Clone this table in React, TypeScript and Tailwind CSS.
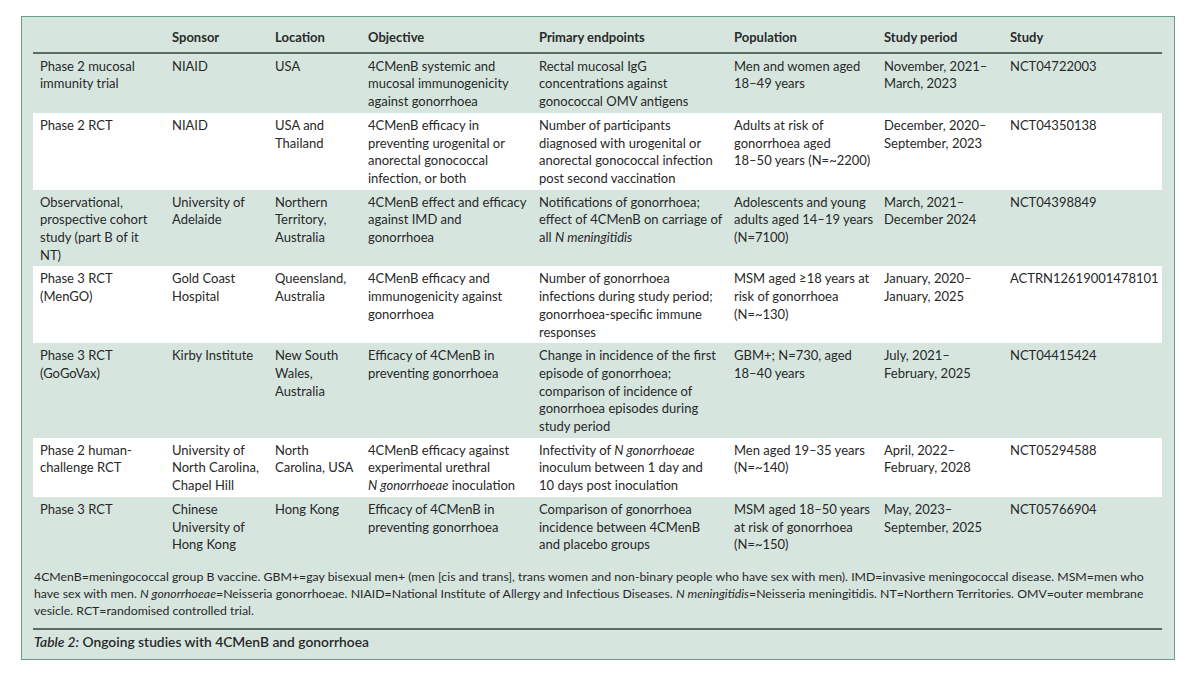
import type { ReactNode } from 'react'

type Row = { cells: ReactNode[][]; white?: boolean }

const cols = 'grid grid-cols-[139px_103px_93px_171px_195px_150px_126px_1fr]'

const headers = ['', 'Sponsor', 'Location', 'Objective', 'Primary endpoints', 'Population', 'Study period', 'Study']

const rows: Row[] = [
  {
    cells: [
      ['Phase 2 mucosal', 'immunity trial'],
      ['NIAID'],
      ['USA'],
      ['4CMenB systemic and', 'mucosal immunogenicity', 'against gonorrhoea'],
      ['Rectal mucosal IgG', 'concentrations against', 'gonococcal OMV antigens'],
      ['Men and women aged', '18–49 years'],
      ['November, 2021–', 'March, 2023'],
      ['NCT04722003'],
    ],
  },
  {
    white: true,
    cells: [
      ['Phase 2 RCT'],
      ['NIAID'],
      ['USA and', 'Thailand'],
      ['4CMenB efficacy in', 'preventing urogenital or', 'anorectal gonococcal', 'infection, or both'],
      ['Number of participants', 'diagnosed with urogenital or', 'anorectal gonococcal infection', 'post second vaccination'],
      ['Adults at risk of', 'gonorrhoea aged', '18–50 years (N=~2200)'],
      ['December, 2020–', 'September, 2023'],
      ['NCT04350138'],
    ],
  },
  {
    cells: [
      ['Observational,', 'prospective cohort', 'study (part B of it', 'NT)'],
      ['University of', 'Adelaide'],
      ['Northern', 'Territory,', 'Australia'],
      ['4CMenB effect and efficacy', 'against IMD and', 'gonorrhoea'],
      [
        'Notifications of gonorrhoea;',
        'effect of 4CMenB on carriage of',
        <>all <i>N meningitidis</i></>,
      ],
      ['Adolescents and young', 'adults aged 14–19 years', '(N=7100)'],
      ['March, 2021–', 'December 2024'],
      ['NCT04398849'],
    ],
  },
  {
    white: true,
    cells: [
      ['Phase 3 RCT', '(MenGO)'],
      ['Gold Coast', 'Hospital'],
      ['Queensland,', 'Australia'],
      ['4CMenB efficacy and', 'immunogenicity against', 'gonorrhoea'],
      ['Number of gonorrhoea', 'infections during study period;', 'gonorrhoea-specific immune', 'responses'],
      ['MSM aged ≥18 years at', 'risk of gonorrhoea', '(N=~130)'],
      ['January, 2020–', 'January, 2025'],
      ['ACTRN12619001478101'],
    ],
  },
  {
    cells: [
      ['Phase 3 RCT', '(GoGoVax)'],
      ['Kirby Institute'],
      ['New South', 'Wales,', 'Australia'],
      ['Efficacy of 4CMenB in', 'preventing gonorrhoea'],
      [
        'Change in incidence of the first',
        'episode of gonorrhoea;',
        'comparison of incidence of',
        'gonorrhoea episodes during',
        'study period',
      ],
      ['GBM+; N=730, aged', '18–40 years'],
      ['July, 2021–', 'February, 2025'],
      ['NCT04415424'],
    ],
  },
  {
    white: true,
    cells: [
      ['Phase 2 human-', 'challenge RCT'],
      ['University of', 'North Carolina,', 'Chapel Hill'],
      ['North', 'Carolina, USA'],
      ['4CMenB efficacy against', 'experimental urethral', <><i>N gonorrhoeae</i> inoculation</>],
      [<>Infectivity of <i>N gonorrhoeae</i></>, 'inoculum between 1 day and', '10 days post inoculation'],
      ['Men aged 19–35 years', '(N=~140)'],
      ['April, 2022–', 'February, 2028'],
      ['NCT05294588'],
    ],
  },
  {
    cells: [
      ['Phase 3 RCT'],
      ['Chinese', 'University of', 'Hong Kong'],
      ['Hong Kong'],
      ['Efficacy of 4CMenB in', 'preventing gonorrhoea'],
      ['Comparison of gonorrhoea', 'incidence between 4CMenB', 'and placebo groups'],
      ['MSM aged 18–50 years', 'at risk of gonorrhoea', '(N=~150)'],
      ['May, 2023–', 'September, 2025'],
      ['NCT05766904'],
    ],
  },
]

export default function App() {
  return (
    <div className="min-h-[675px] w-[1200px] bg-white pt-[16px] pl-[21px] text-[#282828]" style={{ fontFamily: 'Lato, "Open Sans", sans-serif' }}>
      <div className="h-[644px] w-[1154px] border border-[#6a9e86] bg-[#d6e6df] pl-[11px] pr-[12px]">
        {/* Header */}
        <div className={`${cols} border-b-2 border-[#5d6b66] pt-[12px] pb-[5px] text-[13px] font-bold leading-[17.7px] text-[#2a2a2a]`}>
          {headers.map((h, i) => (
            <div key={i} className={i === 0 ? 'pl-[7px]' : ''}>
              {h}
            </div>
          ))}
        </div>

        {/* Body */}
        {rows.map((row, ri) => (
          <div
            key={ri}
            className={`${cols} pt-[4px] pb-[2px] text-[13px] leading-[17.7px] ${row.white ? 'bg-white' : ''}`}
          >
            {row.cells.map((lines, ci) => (
              <div key={ci} className={`whitespace-nowrap ${ci === 0 ? 'pl-[7px]' : ''}`}>
                {lines.map((l, li) => (
                  <div key={li}>{l}</div>
                ))}
              </div>
            ))}
          </div>
        ))}

        {/* Footnote */}
        <div className="mt-[12px] pl-[1px] text-[12.3px] leading-[17px] whitespace-nowrap">
          <p>
            4CMenB=meningococcal group B vaccine. GBM+=gay bisexual men+ (men [cis and trans], trans women and non-binary people who have sex with men). IMD=invasive meningococcal disease. MSM=men who
          </p>
          <p>
            have sex with men. <i>N gonorrhoeae</i>=Neisseria gonorrhoeae. NIAID=National Institute of Allergy and Infectious Diseases. <i>N meningitidis</i>=Neisseria meningitidis. NT=Northern Territories. OMV=outer membrane
          </p>
          <p>vesicle. RCT=randomised controlled trial.</p>
        </div>

        {/* Caption */}
        <div className="mt-[9px] border-t-2 border-[#5d6b66] pt-[3px] pl-[1px] text-[13.8px] font-semibold leading-[18px]">
          <i>Table 2:</i> Ongoing studies with 4CMenB and gonorrhoea
        </div>
      </div>
    </div>
  )
}
